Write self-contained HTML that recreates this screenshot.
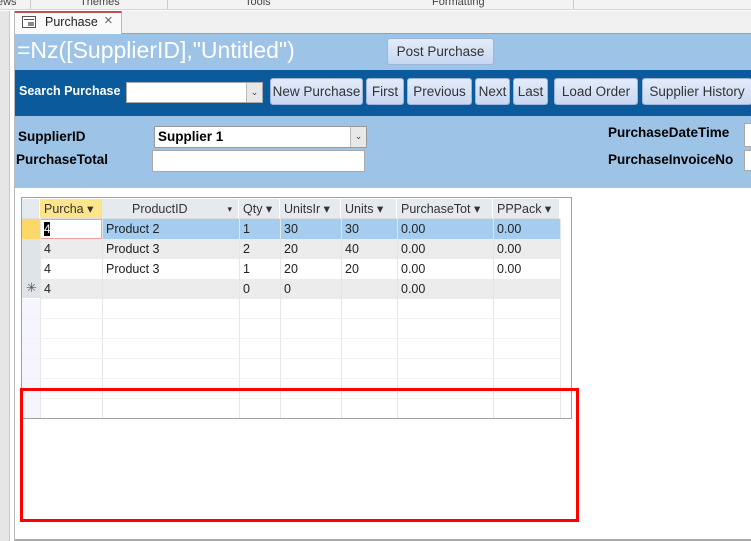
<!DOCTYPE html>
<html><head><meta charset="utf-8"><style>
*{box-sizing:border-box;margin:0;padding:0}
body{width:751px;height:541px;overflow:hidden;background:#fff;font-family:"Liberation Sans",sans-serif;position:relative}
.a{position:absolute}
.rib{left:0;top:0;width:751px;height:10px;background:#f3f3f3;border-bottom:1px solid #d4d4d4;font-size:11px;color:#444;overflow:hidden}
.rib span{position:absolute;top:-4px}
.btn{position:absolute;border:1px solid #9fb4d8;border-radius:3px;background:linear-gradient(#e4ecfa,#c8d8f2);color:#333;font-size:13.5px;text-align:center;line-height:25px;white-space:nowrap}
.lbl{position:absolute;font-weight:bold;font-size:13.5px;color:#000}
.box{position:absolute;background:#fff;border:1px solid #a9a9a9}
.dd{position:absolute;right:0;top:0;bottom:0;width:16px;background:#e8e8e8;border-left:1px solid #bbb;font-size:9px;color:#444;text-align:center;line-height:19px}
.cell{position:absolute;font-size:12.5px;color:#222;height:20px;line-height:20px;padding-left:4px;white-space:nowrap;overflow:hidden;border-right:1px solid #ddd;border-bottom:1px solid #ddd}
.hd{background:#e6e9ee;color:#333;border-right:1px solid #fff}
</style></head><body>
<div class="a rib"><span style="left:-3px">ews</span><span style="left:80px">Themes</span><span style="left:245px">Tools</span><span style="left:432px">Formatting</span>
<div class="a" style="left:30px;top:0;width:1px;height:10px;background:#ccc"></div><div class="a" style="left:167px;top:0;width:1px;height:10px;background:#ccc"></div><div class="a" style="left:573px;top:0;width:1px;height:10px;background:#ccc"></div></div>
<div class="a" style="left:0;top:11px;width:10px;height:530px;background:#e6e6e6;border-right:1px solid #c8c8c8"></div>
<div class="a" style="left:14px;top:11px;width:1px;height:530px;background:#bbb"></div>
<div class="a" style="left:15px;top:11px;width:736px;height:23px;background:#f0f0f0;border-bottom:1px solid #a0a0a0"></div>
<div class="a" style="left:15px;top:11px;width:107px;height:24px;background:#fafafa;border-top:2px solid #c0504d;border-right:1px solid #bbb"></div>
<div class="a" style="left:22px;top:16px;width:14px;height:12px;border:1px solid #555;background:#fff"><div class="a" style="left:1px;top:2px;width:10px;height:1px;background:#555"></div><div class="a" style="left:5px;top:5px;width:6px;height:4px;background:#8a8a8a"></div></div>
<div class="a" style="left:45px;top:15px;font-size:12.5px;color:#222">Purchase</div>
<div class="a" style="left:104px;top:12px;font-size:15px;color:#666">×</div>
<div class="a" style="left:15px;top:34px;width:736px;height:36px;background:#9dc3e6"></div>
<div class="a" style="left:17px;top:37px;font-size:23px;color:#fff">=Nz([SupplierID],"Untitled")</div>
<div class="btn" style="left:387px;top:38px;width:107px;height:27px">Post Purchase</div>
<div class="a" style="left:15px;top:70px;width:736px;height:46px;background:#0a5a9c"></div>
<div class="lbl" style="left:19px;top:84px;color:#fff;font-size:12.5px">Search Purchase</div>
<div class="box" style="left:126px;top:82px;width:137px;height:21px"><div class="dd">&#8964;</div></div>
<div class="btn" style="left:270px;top:78px;width:93px;height:27px">New Purchase</div>
<div class="btn" style="left:366px;top:78px;width:38px;height:27px">First</div>
<div class="btn" style="left:407px;top:78px;width:65px;height:27px">Previous</div>
<div class="btn" style="left:475px;top:78px;width:35px;height:27px">Next</div>
<div class="btn" style="left:513px;top:78px;width:35px;height:27px">Last</div>
<div class="btn" style="left:554px;top:78px;width:84px;height:27px">Load Order</div>
<div class="btn" style="left:642px;top:78px;width:110px;height:27px">Supplier History</div>
<div class="a" style="left:15px;top:116px;width:736px;height:72px;background:#9dc3e6"></div>
<div class="lbl" style="left:18px;top:129px">SupplierID</div>
<div class="box" style="left:154px;top:126px;width:213px;height:22px;border-color:#999"><div class="a" style="left:3px;top:2px;font-weight:bold;font-size:13.5px">Supplier 1</div><div class="dd">&#8964;</div></div>
<div class="lbl" style="left:16px;top:152px">PurchaseTotal</div>
<div class="box" style="left:152px;top:150px;width:213px;height:22px"></div>
<div class="lbl" style="left:608px;top:125px">PurchaseDateTime</div>
<div class="box" style="left:744px;top:123px;width:10px;height:24px"></div>
<div class="lbl" style="left:608px;top:152px">PurchaseInvoiceNo</div>
<div class="box" style="left:744px;top:150px;width:10px;height:21px"></div>
<div class="a" style="left:21px;top:197px;width:551px;height:222px;border:1px solid #a0a0a0;background:#fff"></div>
<div class="a" style="left:22px;top:219px;width:18px;height:199px;background:#f4f5fd"></div>
<div class="cell hd" style="left:22px;top:199px;width:18px"></div>
<div class="cell" style="left:40px;top:199px;width:62px;background:#fde58c;color:#333">Purcha ▾</div>
<div class="cell hd" style="left:102px;top:199px;width:137px;padding-left:30px">ProductID<span style="position:absolute;right:6px;font-size:9px">▾</span></div>
<div class="cell hd" style="left:239px;top:199px;width:41px">Qty ▾</div>
<div class="cell hd" style="left:280px;top:199px;width:61px">UnitsIr ▾</div>
<div class="cell hd" style="left:341px;top:199px;width:56px">Units ▾</div>
<div class="cell hd" style="left:397px;top:199px;width:96px">PurchaseTot ▾</div>
<div class="cell hd" style="left:493px;top:199px;width:67px">PPPack ▾</div>
<div class="a" style="left:22px;top:219px;width:18px;height:20px;background:#fdd868"></div>
<div class="a" style="left:102px;top:219px;width:458px;height:20px;background:#a5cdf0"></div>
<div class="a" style="left:40px;top:219px;width:62px;height:20px;background:#fff;border:1px solid #f0a0a0"></div>
<div class="a" style="left:22px;top:239px;width:538px;height:20px;background:#ececec"></div>
<div class="a" style="left:22px;top:279px;width:538px;height:20px;background:#ececec"></div>
<div class="a" style="left:22px;top:239px;width:18px;height:60px;background:#e0e3e8;border-bottom:1px solid #fff"></div>
<div class="a" style="left:26px;top:280px;font-size:13px;color:#555">✳</div>
<div class="a" style="left:44px;top:222px;width:6px;height:14px;background:#000;color:#fff;font-size:12px;line-height:14px">4</div>
<div style="font-size:12.5px;color:#222">
<div class="a" style="left:44px;top:242px">4</div><div class="a" style="left:44px;top:262px">4</div><div class="a" style="left:44px;top:282px">4</div>
<div class="a" style="left:106px;top:222px">Product 2</div><div class="a" style="left:106px;top:242px">Product 3</div><div class="a" style="left:106px;top:262px">Product 3</div>
<div class="a" style="left:243px;top:222px">1</div><div class="a" style="left:243px;top:242px">2</div><div class="a" style="left:243px;top:262px">1</div><div class="a" style="left:243px;top:282px">0</div>
<div class="a" style="left:284px;top:222px">30</div><div class="a" style="left:284px;top:242px">20</div><div class="a" style="left:284px;top:262px">20</div><div class="a" style="left:284px;top:282px">0</div>
<div class="a" style="left:345px;top:222px">30</div><div class="a" style="left:345px;top:242px">40</div><div class="a" style="left:345px;top:262px">20</div>
<div class="a" style="left:401px;top:222px">0.00</div><div class="a" style="left:401px;top:242px">0.00</div><div class="a" style="left:401px;top:262px">0.00</div><div class="a" style="left:401px;top:282px">0.00</div>
<div class="a" style="left:497px;top:222px">0.00</div><div class="a" style="left:497px;top:242px">0.00</div><div class="a" style="left:497px;top:262px">0.00</div>
</div>
<svg class="a" style="left:22px;top:219px" width="549" height="199">
<g stroke="#e6e6e6" stroke-width="1">
<line x1="18.5" y1="0" x2="18.5" y2="199"/><line x1="80.5" y1="0" x2="80.5" y2="199"/><line x1="217.5" y1="0" x2="217.5" y2="199"/><line x1="258.5" y1="0" x2="258.5" y2="199"/><line x1="319.5" y1="0" x2="319.5" y2="199"/><line x1="375.5" y1="0" x2="375.5" y2="199"/><line x1="471.5" y1="0" x2="471.5" y2="199"/><line x1="538.5" y1="0" x2="538.5" y2="199"/>
</g><g stroke="#f2f2f2"><line x1="0" y1="99.5" x2="538" y2="99.5"/><line x1="0" y1="119.5" x2="538" y2="119.5"/><line x1="0" y1="139.5" x2="538" y2="139.5"/><line x1="0" y1="159.5" x2="538" y2="159.5"/><line x1="0" y1="179.5" x2="538" y2="179.5"/></g>
</svg>
<div class="a" style="left:20px;top:388px;width:559px;height:134px;border:3px solid #f00"></div>
<div class="a" style="left:15px;top:539px;width:736px;height:2px;background:#aaa"></div>
</body></html>
